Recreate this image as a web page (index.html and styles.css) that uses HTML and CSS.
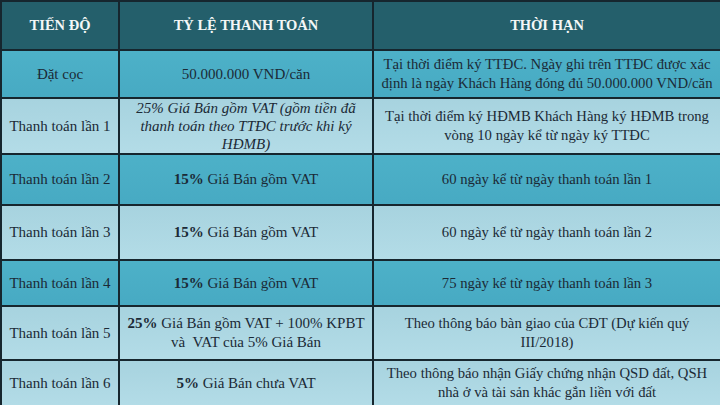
FILE: index.html
```html
<!DOCTYPE html>
<html>
<head>
<meta charset="utf-8">
<link rel="stylesheet" href="styles.css">
</head>
<body>
<table class="plan">
  <colgroup>
    <col class="c1"><col class="c2"><col class="c3">
  </colgroup>
  <thead>
    <tr class="head">
      <th>TIẾN ĐỘ</th>
      <th>TỶ LỆ THANH TOÁN</th>
      <th>THỜI HẠN</th>
    </tr>
  </thead>
  <tbody>
    <tr class="dark r1">
      <td>Đặt cọc</td>
      <td>50.000.000 VND/căn</td>
      <td>Tại thời điểm ký TTĐC. Ngày ghi trên TTĐC được xác định là ngày Khách Hàng đóng đủ 50.000.000 VND/căn</td>
    </tr>
    <tr class="light r2">
      <td>Thanh toán lần 1</td>
      <td class="it">25% Giá Bán gồm VAT (gồm tiền đã thanh toán theo TTĐC trước khi ký HĐMB)</td>
      <td>Tại thời điểm ký HĐMB Khách Hàng ký HĐMB trong vòng 10 ngày kể từ ngày ký TTĐC</td>
    </tr>
    <tr class="dark r3">
      <td>Thanh toán lần 2</td>
      <td><b>15%</b> Giá Bán gồm VAT</td>
      <td>60 ngày kể từ ngày thanh toán lần 1</td>
    </tr>
    <tr class="light r4">
      <td>Thanh toán lần 3</td>
      <td><b>15%</b> Giá Bán gồm VAT</td>
      <td>60 ngày kể từ ngày thanh toán lần 2</td>
    </tr>
    <tr class="dark r5">
      <td>Thanh toán lần 4</td>
      <td><b>15%</b> Giá Bán gồm VAT</td>
      <td>75 ngày kể từ ngày thanh toán lần 3</td>
    </tr>
    <tr class="light r6">
      <td>Thanh toán lần 5</td>
      <td><b>25%</b> Giá Bán gồm VAT + 100% KPBT<br>và&nbsp; VAT của 5% Giá Bán</td>
      <td class="narrow">Theo thông báo bàn giao của CĐT (Dự kiến quý III/2018)</td>
    </tr>
    <tr class="light r7">
      <td>Thanh toán lần 6</td>
      <td><b>5%</b> Giá Bán chưa VAT</td>
      <td>Theo thông báo nhận Giấy chứng nhận QSD đất, QSH nhà ở và tài sản khác gắn liền với đất</td>
    </tr>
  </tbody>
</table>
</body>
</html>
```
FILE: styles.css
```css
html, body {
  margin: 0;
  padding: 0;
  background: #ffffff;
}
.plan {
  width: 720px;
  border-collapse: collapse;
  table-layout: fixed;
  font-family: "Liberation Serif", "Times New Roman", serif;
  font-size: 15px;
  line-height: 19px;
  color: #1b2a36;
}
.c1 { width: 118px; }
.c2 { width: 254px; }
.c3 { width: 348px; }
.plan th,
.plan td {
  border: 2px solid #16262e;
  text-align: center;
  vertical-align: middle;
  padding: 0 2px;
}
.plan td:nth-child(3) {
  font-size: 14.7px;
}
.plan td.narrow {
  padding: 0 26px;
}
.head th {
  background: #245f6b;
  color: #f4f7f7;
  font-size: 14.5px;
  font-weight: bold;
  height: 47px;
}
.dark td {
  background: linear-gradient(#4db1c8, #47aac3);
}
.light td {
  background: linear-gradient(#a7d3df, #b3dce7);
}
.it {
  font-style: italic;
  line-height: 18px;
}
.r1 td { height: 46px; }
.r2 td { height: 54px; }
.r3 td { height: 49px; }
.r4 td { height: 53px; }
.r5 td { height: 44px; }
.r6 td { height: 52px; }
.r7 td { height: 44px; }
```
